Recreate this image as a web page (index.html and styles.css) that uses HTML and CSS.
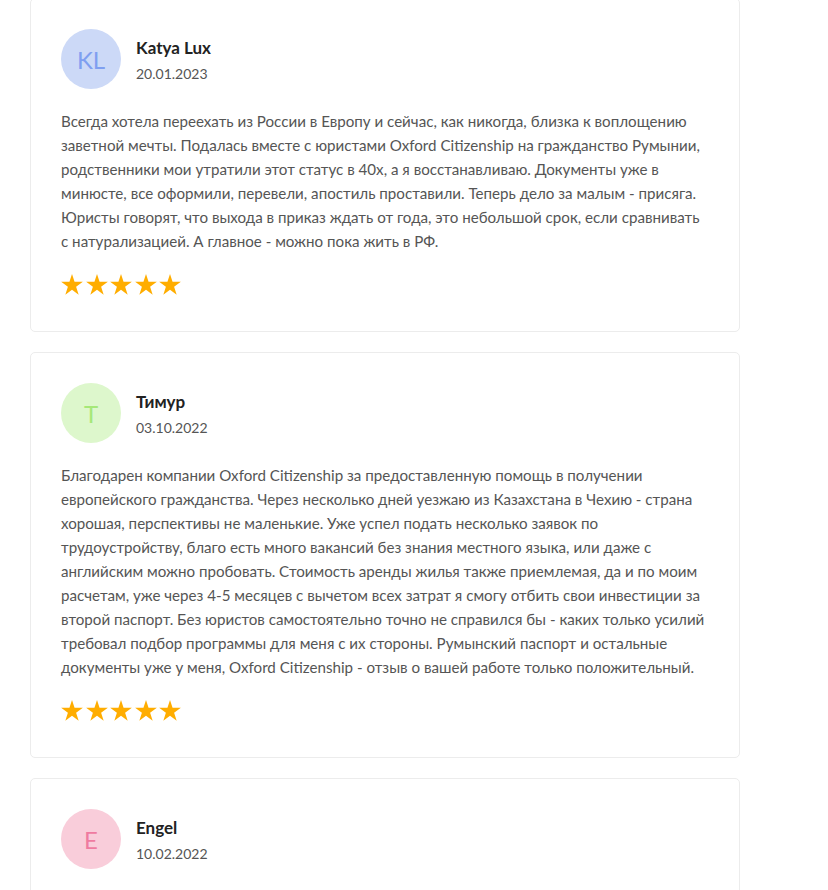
FILE: index.html
```html
<!DOCTYPE html>
<html lang="ru">
<head>
<meta charset="utf-8">
<title>Отзывы</title>
<link rel="stylesheet" href="styles.css">
</head>
<body>
<div class="reviews">
  <div class="card">
    <div class="head">
      <div class="avatar av-blue">KL</div>
      <div class="info">
        <div class="name">Katya Lux</div>
        <div class="date">20.01.2023</div>
      </div>
    </div>
    <p class="text">Всегда хотела переехать из России в Европу и сейчас, как никогда, близка к воплощению заветной мечты. Подалась вместе с юристами Oxford Citizenship на гражданство Румынии, родственники мои утратили этот статус в 40х, а я восстанавливаю. Документы уже в минюсте, все оформили, перевели, апостиль проставили. Теперь дело за малым - присяга. Юристы говорят, что выхода в приказ ждать от года, это небольшой срок, если сравнивать с натурализацией. А главное - можно пока жить в РФ.</p>
    <div class="stars">
      <svg class="star" viewBox="0 0 24 23"><path d="M12 0l2.8 8.6h9.1l-7.4 5.4 2.8 8.7L12 17.3l-7.3 5.4 2.8-8.7L0.1 8.6h9.1z"/></svg>
      <svg class="star" viewBox="0 0 24 23"><path d="M12 0l2.8 8.6h9.1l-7.4 5.4 2.8 8.7L12 17.3l-7.3 5.4 2.8-8.7L0.1 8.6h9.1z"/></svg>
      <svg class="star" viewBox="0 0 24 23"><path d="M12 0l2.8 8.6h9.1l-7.4 5.4 2.8 8.7L12 17.3l-7.3 5.4 2.8-8.7L0.1 8.6h9.1z"/></svg>
      <svg class="star" viewBox="0 0 24 23"><path d="M12 0l2.8 8.6h9.1l-7.4 5.4 2.8 8.7L12 17.3l-7.3 5.4 2.8-8.7L0.1 8.6h9.1z"/></svg>
      <svg class="star" viewBox="0 0 24 23"><path d="M12 0l2.8 8.6h9.1l-7.4 5.4 2.8 8.7L12 17.3l-7.3 5.4 2.8-8.7L0.1 8.6h9.1z"/></svg>
    </div>
  </div>

  <div class="card">
    <div class="head">
      <div class="avatar av-green">T</div>
      <div class="info">
        <div class="name">Тимур</div>
        <div class="date">03.10.2022</div>
      </div>
    </div>
    <p class="text">Благодарен компании Oxford Citizenship за предоставленную помощь в получении европейского гражданства. Через несколько дней уезжаю из Казахстана в Чехию - страна хорошая, перспективы не маленькие. Уже успел подать несколько заявок по трудоустройству, благо есть много вакансий без знания местного языка, или даже с английским можно пробовать. Стоимость аренды жилья также приемлемая, да и по моим расчетам, уже через 4-5 месяцев с вычетом всех затрат я смогу отбить свои инвестиции за второй паспорт. Без юристов самостоятельно точно не справился бы - каких только усилий требовал подбор программы для меня с их стороны. Румынский паспорт и остальные документы уже у меня, Oxford Citizenship - отзыв о вашей работе только положительный.</p>
    <div class="stars">
      <svg class="star" viewBox="0 0 24 23"><path d="M12 0l2.8 8.6h9.1l-7.4 5.4 2.8 8.7L12 17.3l-7.3 5.4 2.8-8.7L0.1 8.6h9.1z"/></svg>
      <svg class="star" viewBox="0 0 24 23"><path d="M12 0l2.8 8.6h9.1l-7.4 5.4 2.8 8.7L12 17.3l-7.3 5.4 2.8-8.7L0.1 8.6h9.1z"/></svg>
      <svg class="star" viewBox="0 0 24 23"><path d="M12 0l2.8 8.6h9.1l-7.4 5.4 2.8 8.7L12 17.3l-7.3 5.4 2.8-8.7L0.1 8.6h9.1z"/></svg>
      <svg class="star" viewBox="0 0 24 23"><path d="M12 0l2.8 8.6h9.1l-7.4 5.4 2.8 8.7L12 17.3l-7.3 5.4 2.8-8.7L0.1 8.6h9.1z"/></svg>
      <svg class="star" viewBox="0 0 24 23"><path d="M12 0l2.8 8.6h9.1l-7.4 5.4 2.8 8.7L12 17.3l-7.3 5.4 2.8-8.7L0.1 8.6h9.1z"/></svg>
    </div>
  </div>

  <div class="card">
    <div class="head">
      <div class="avatar av-pink">E</div>
      <div class="info">
        <div class="name">Engel</div>
        <div class="date">10.02.2022</div>
      </div>
    </div>
  </div>
</div>
</body>
</html>
```

FILE: styles.css
```css
html, body {
  margin: 0;
  padding: 0;
  background: #fff;
}
body {
  font-family: "Lato", "Open Sans", sans-serif;
  color: #555;
  overflow: hidden;
  height: 890px;
}
.reviews {
  display: flex;
  flex-direction: column;
  gap: 20px;
  width: 710px;
  margin: -2px 0 0 30px;
}
.card {
  border: 1px solid #ececec;
  border-radius: 5px;
  padding: 30px 30px 32px;
  background: #fff;
}
.head {
  display: flex;
  align-items: flex-start;
  gap: 15px;
}
.avatar {
  width: 60px;
  height: 60px;
  border-radius: 50%;
  display: flex;
  align-items: center;
  justify-content: center;
  font-size: 24px;
  flex-shrink: 0;
}
.av-blue { background: #ccd9f7; color: #7f9ff0; }
.av-green { background: #ddf7cc; color: #a5e878; }
.av-pink { background: #f9cdda; color: #ef7ba0; }
.info {
  padding-top: 7px;
}
.name {
  font-size: 17px;
  font-weight: 700;
  color: #222;
  line-height: 24px;
}
.date {
  font-size: 14px;
  color: #555;
  line-height: 24px;
  margin-top: 2px;
}
.text {
  margin: 20px 0 0;
  font-size: 15.15px;
  line-height: 24px;
  color: #555;
}
.stars {
  display: flex;
  align-items: center;
  gap: 2.5px;
  height: 30px;
  margin-top: 16px;
}
.star {
  width: 22px;
  height: 21px;
  fill: #ffad00;
}
```
